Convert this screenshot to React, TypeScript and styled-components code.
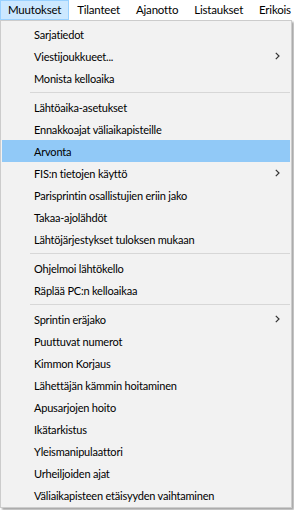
import React from "react";
import styled, { createGlobalStyle } from "styled-components";

const Global = createGlobalStyle`
  html, body { margin: 0; padding: 0; background: #ffffff; }
  body { font-family: "Lato", "Noto Sans", sans-serif; font-size: 11px; letter-spacing: -0.2px; color: #000; }
`;

const Page = styled.div`
  width: 294px;
  height: 510px;
  overflow: hidden;
  position: relative;
  background: #ffffff;
`;

const MenuBar = styled.div`
  display: flex;
  height: 20px;
  align-items: stretch;
  background: #ffffff;
  overflow: hidden;
`;

const BarItem = styled.div<{ $active?: boolean }>`
  display: flex;
  align-items: center;
  padding: 0 7px;
  box-sizing: border-box;
  height: 20px;
  line-height: 1;
  font-size: 11.5px;
  white-space: nowrap;
  flex-shrink: 0;
  background: ${(p) => (p.$active ? "#cce8ff" : "transparent")};
  border: 1px solid ${(p) => (p.$active ? "#99d1ff" : "transparent")};
`;

const Dropdown = styled.div`
  position: absolute;
  top: 20px;
  left: 0;
  width: 292px;
  box-sizing: border-box;
  background: #f2f2f2;
  border: 1px solid #cccccc;
  padding: 2px 1px 1px 1px;
  box-shadow: 2px 2px 2px rgba(0, 0, 0, 0.35);
  display: flex;
  flex-direction: column;
`;

const Item = styled.div<{ $selected?: boolean }>`
  height: 22px;
  display: flex;
  align-items: center;
  justify-content: space-between;
  padding: 0 10px 0 32px;
  background: ${(p) => (p.$selected ? "#91c9f7" : "transparent")};
  white-space: nowrap;
  line-height: 1;
`;

const Separator = styled.div`
  height: 7px;
  display: flex;
  align-items: center;
  padding-left: 28px;
  &::after {
    content: "";
    flex: 1;
    height: 1px;
    background: #d7d7d7;
  }
`;

const Chevron = () => (
  <svg width="5" height="8" viewBox="0 0 5 8" style={{ display: "block" }}>
    <polyline points="0.8,0.8 4,4 0.8,7.2" fill="none" stroke="#333" strokeWidth="1.2" />
  </svg>
);

type Entry = { label: string; sub?: boolean; selected?: boolean } | "sep";

const entries: Entry[] = [
  { label: "Sarjatiedot" },
  { label: "Viestijoukkueet...", sub: true },
  { label: "Monista kelloaika" },
  "sep",
  { label: "Lähtöaika-asetukset" },
  { label: "Ennakkoajat väliaikapisteille" },
  { label: "Arvonta", selected: true },
  { label: "FIS:n tietojen käyttö", sub: true },
  { label: "Parisprintin osallistujien eriin jako" },
  { label: "Takaa-ajolähdöt" },
  { label: "Lähtöjärjestykset tuloksen mukaan" },
  "sep",
  { label: "Ohjelmoi lähtökello" },
  { label: "Räplää PC:n kelloaikaa" },
  "sep",
  { label: "Sprintin eräjako", sub: true },
  { label: "Puuttuvat numerot" },
  { label: "Kimmon Korjaus" },
  { label: "Lähettäjän kämmin hoitaminen" },
  { label: "Apusarjojen hoito" },
  { label: "Ikätarkistus" },
  { label: "Yleismanipulaattori" },
  { label: "Urheiljoiden ajat" },
  { label: "Väliaikapisteen etäisyyden vaihtaminen" },
];

const bar = ["Muutokset", "Tilanteet", "Ajanotto", "Listaukset", "Erikois"];

export default function App() {
  return (
    <Page>
      <Global />
      <MenuBar>
        {bar.map((b, i) => (
          <BarItem key={b} $active={i === 0}>
            {b}
          </BarItem>
        ))}
      </MenuBar>
      <Dropdown>
        {entries.map((e, i) =>
          e === "sep" ? (
            <Separator key={i} />
          ) : (
            <Item key={i} $selected={e.selected}>
              <span>{e.label}</span>
              {e.sub && <Chevron />}
            </Item>
          )
        )}
      </Dropdown>
    </Page>
  );
}
